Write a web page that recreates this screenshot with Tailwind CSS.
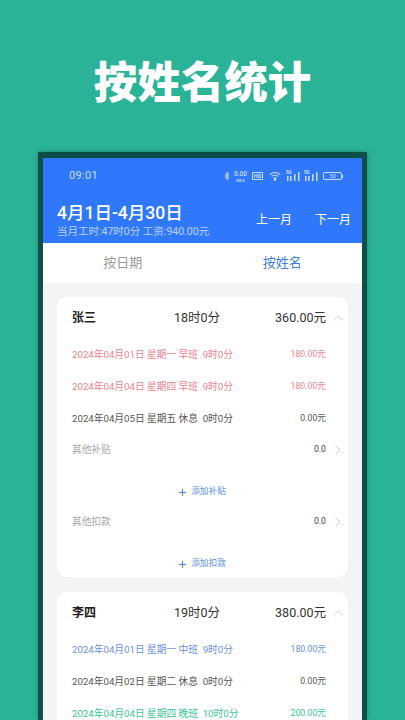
<!DOCTYPE html>
<html lang="zh-CN">
<head>
  <meta charset="UTF-8" />
  <meta name="viewport" content="width=device-width, initial-scale=1.0"/>
  <title>按姓名统计</title>
  <script src="https://cdn.jsdelivr.net/npm/@tailwindcss/browser@4"></script>
</head>
<body class="bg-[#2ab397] font-['Roboto','Noto_Sans_CJK_SC',sans-serif]">
<div class="w-[405px] h-[720px] overflow-hidden flex flex-col items-center">

  <h1 class="h-[152px] shrink-0 pt-[53px] text-[43.5px] leading-[54px] font-black text-white font-['Noto_Sans_CJK_SC',sans-serif]">按姓名统计</h1>

  <!-- phone -->
  <div class="w-[329px] h-[568px] shrink-0 border-x-[5px] border-t-[6px] border-[#0e4f47] bg-[#f3f4f6] flex flex-col shadow-[0_0_5px_rgba(14,79,71,0.45)]">

    <div class="bg-[#2f78fb] text-white h-[85px] shrink-0 flex flex-col">
      <!-- status bar -->
      <div class="h-[44px] pb-[8px] pl-[26px] pr-[19px] flex items-center justify-between text-white/75 shrink-0">
        <span class="text-[11px] tracking-[0.3px]">09:01</span>
        <div class="flex items-center">
          <svg width="6" height="10" viewBox="0 0 7 10" fill="none" stroke="currentColor" stroke-width="1.100"><path d="M1 3l5 4-2.500 2.300V.7L6 3 1 7"/></svg>
          <div class="ml-[3px] w-[15px] text-center font-medium">
            <div class="text-[6.500px] leading-[8px]">0.00</div>
            <div class="text-[4px] leading-[5px]">KB/S</div>
          </div>
          <span class="ml-[4px] w-[11px] h-[8px] border border-current rounded-[1px] text-[5.500px] leading-[6px] text-center font-bold">HD</span>
          <svg width="12" height="10" viewBox="0 0 13 10" fill="none" stroke="currentColor" stroke-width="1.200" class="ml-[6px]"><path d="M1 3.500c3-3 8-3 11 0M3 5.500c2-2 5-2 7 0M5 7.500c.8-.8 2.200-.8 3 0"/><circle cx="6.500" cy="9" r=".7" fill="currentColor"/></svg>
          <div class="ml-[5px] relative w-[14px] h-[10px]">
            <span class="absolute left-0 top-0 text-[4.500px] leading-[4px] font-bold">5G</span>
            <svg width="14" height="10" viewBox="0 0 14 10" fill="currentColor"><rect x="1" y="5" width="1.500" height="5"/><rect x="4" y="5" width="1.500" height="5"/><rect x="8" y="3" width="1.500" height="7"/><rect x="12" y="1" width="1.500" height="9"/></svg>
          </div>
          <div class="ml-[4px] relative w-[14px] h-[10px]">
            <span class="absolute left-0 top-0 text-[4.500px] leading-[4px] font-bold">5G</span>
            <svg width="14" height="10" viewBox="0 0 14 10" fill="currentColor"><rect x="1" y="5" width="1.500" height="5"/><rect x="4" y="5" width="1.500" height="5"/><rect x="8" y="3" width="1.500" height="7"/><rect x="12" y="1" width="1.500" height="9"/></svg>
          </div>
          <span class="ml-[5px] w-[19px] h-[8px] border border-current rounded-[2px] text-[6px] leading-[6px] text-center">50</span>
          <span class="w-[1px] h-[3px] bg-current"></span>
        </div>
      </div>
      <!-- header -->
      <div class="pl-[14px] pr-[11px] flex justify-between">
        <div>
          <div class="text-[17.500px] leading-[22px] font-medium">4月1日-4月30日</div>
          <div class="text-[10.500px] leading-[14px] text-white/65 mt-[1px]">当月工时:47时0分 工资:940.00元</div>
        </div>
        <div class="flex gap-[23px] text-[12px] pt-[9px] leading-[18px]">
          <span>上一月</span>
          <span>下一月</span>
        </div>
      </div>
    </div>

    <!-- tabs -->
    <div class="h-[40px] bg-white shrink-0 grid grid-cols-2 text-center text-[13px] leading-[40px]">
      <span class="text-[#9a9a9a]">按日期</span>
      <span class="text-[#3f7fd6]">按姓名</span>
    </div>

    <div class="px-[14px] pt-[14px] flex flex-col gap-[15px]">
      <!-- card 1 -->
      <div class="bg-white rounded-[10px] h-[280px] shrink-0 pl-[15px] pr-[5px]">
        <div class="h-[42px] flex items-center">
          <span class="w-[102px] text-[12px] font-bold text-[#222]">张三</span>
          <span class="text-[12.500px] text-[#333]">18时0分</span>
          <div class="ml-auto flex items-center gap-[7px] text-[12.500px] text-[#333]">
            360.00元
            <svg width="10" height="6" viewBox="0 0 10 6" fill="none" stroke="#d8d8d8" stroke-width="1"><path d="M.5 5.500L5 1l4.500 4.500"/></svg>
          </div>
        </div>
        <div class="pr-[17px] flex flex-col">
          <div class="h-[32px] flex items-center justify-between text-[#e8848c]"><span class="text-[9.700px]">2024年04月01日 星期一 早班&nbsp; 9时0分</span><span class="text-[8.700px]">180.00元</span></div>
          <div class="h-[32px] flex items-center justify-between text-[#e8848c]"><span class="text-[9.700px]">2024年04月04日 星期四 早班&nbsp; 9时0分</span><span class="text-[8.700px]">180.00元</span></div>
          <div class="h-[32px] flex items-center justify-between text-[#555]"><span class="text-[9.700px]">2024年04月05日 星期五 休息&nbsp; 0时0分</span><span class="text-[8.700px]">0.00元</span></div>
        </div>
        <div class="h-[28px] pt-[2px] pr-[2px] flex items-center justify-between">
          <span class="text-[9.700px] text-[#a8a8a8]">其他补贴</span>
          <div class="flex items-center gap-[9px] text-[8.700px] text-[#444]">0.0
            <svg width="6" height="10" viewBox="0 0 6 10" fill="none" stroke="#cfcfcf" stroke-width="1"><path d="M.5.500L5 5 .5 9.500"/></svg>
          </div>
        </div>
        <div class="h-[44px] pt-[14px] pr-[10px] flex items-center justify-center gap-[5px] text-[8.700px] text-[#5b8fd8]">
          <svg width="7" height="7" viewBox="0 0 8 8" stroke="#4a86e0" stroke-width="1.200"><path d="M4 0v8M0 4h8"/></svg>
          添加补贴
        </div>
        <div class="h-[28px] pt-[2px] pr-[2px] flex items-center justify-between">
          <span class="text-[9.700px] text-[#a8a8a8]">其他扣款</span>
          <div class="flex items-center gap-[9px] text-[8.700px] text-[#444]">0.0
            <svg width="6" height="10" viewBox="0 0 6 10" fill="none" stroke="#cfcfcf" stroke-width="1"><path d="M.5.500L5 5 .5 9.500"/></svg>
          </div>
        </div>
        <div class="h-[42px] pt-[16px] pr-[10px] flex items-center justify-center gap-[5px] text-[8.700px] text-[#5b8fd8]">
          <svg width="7" height="7" viewBox="0 0 8 8" stroke="#4a86e0" stroke-width="1.200"><path d="M4 0v8M0 4h8"/></svg>
          添加扣款
        </div>
      </div>
      <!-- card 2 -->
      <div class="bg-white rounded-[10px] h-[200px] shrink-0 pl-[15px] pr-[5px]">
        <div class="h-[42px] flex items-center">
          <span class="w-[102px] text-[12px] font-bold text-[#222]">李四</span>
          <span class="text-[12.500px] text-[#333]">19时0分</span>
          <div class="ml-auto flex items-center gap-[7px] text-[12.500px] text-[#333]">
            380.00元
            <svg width="10" height="6" viewBox="0 0 10 6" fill="none" stroke="#d8d8d8" stroke-width="1"><path d="M.5 5.500L5 1l4.500 4.500"/></svg>
          </div>
        </div>
        <div class="pr-[17px] flex flex-col">
          <div class="h-[32px] flex items-center justify-between text-[#6a8fdc]"><span class="text-[9.700px]">2024年04月01日 星期一 中班&nbsp; 9时0分</span><span class="text-[8.700px]">180.00元</span></div>
          <div class="h-[32px] flex items-center justify-between text-[#555]"><span class="text-[9.700px]">2024年04月02日 星期二 休息&nbsp; 0时0分</span><span class="text-[8.700px]">0.00元</span></div>
          <div class="h-[32px] flex items-center justify-between text-[#3bc495]"><span class="text-[9.700px]">2024年04月04日 星期四 晚班&nbsp; 10时0分</span><span class="text-[8.700px]">200.00元</span></div>
        </div>
      </div>
    </div>
  </div>
</div>
</body>
</html>
